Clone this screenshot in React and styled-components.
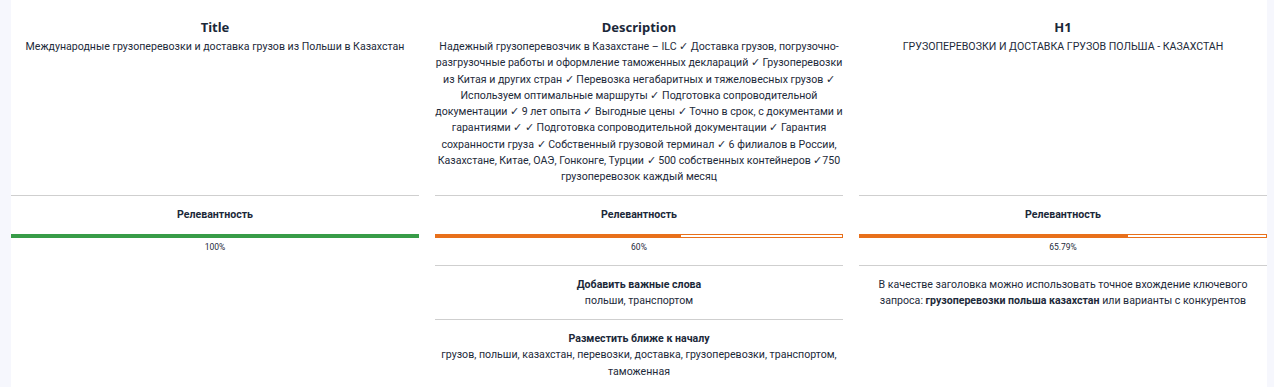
import React from "react";
import styled, { createGlobalStyle } from "styled-components";

const GlobalStyle = createGlobalStyle`
  html, body {
    margin: 0;
    padding: 0;
    background: #f6f7fd;
  }
  body {
    font-family: Roboto, "Liberation Sans", Arial, sans-serif;
    color: #1d2a3a;
  }
`;

const columns = [
  {
    heading: "Title",
    text: "Международные грузоперевозки и доставка грузов из Польши в Казахстан",
    score: 100,
    notes: [],
  },
  {
    heading: "Description",
    text: "Надежный грузоперевозчик в Казахстане – ILC ✓ Доставка грузов, погрузочно-разгрузочные работы и оформление таможенных деклараций ✓ Грузоперевозки из Китая и других стран ✓ Перевозка негабаритных и тяжеловесных грузов ✓ Используем оптимальные маршруты ✓ Подготовка сопроводительной документации ✓ 9 лет опыта ✓ Выгодные цены ✓ Точно в срок, с документами и гарантиями ✓ ✓ Подготовка сопроводительной документации ✓ Гарантия сохранности груза ✓ Собственный грузовой терминал ✓ 6 филиалов в России, Казахстане, Китае, ОАЭ, Гонконге, Турции ✓ 500 собственных контейнеров ✓750 грузоперевозок каждый месяц",
    score: 60,
    notes: [
      { title: "Добавить важные слова", body: "польши, транспортом" },
      {
        title: "Разместить ближе к началу",
        body: "грузов, польши, казахстан, перевозки, доставка, грузоперевозки, транспортом, таможенная",
      },
    ],
  },
  {
    heading: "H1",
    text: "ГРУЗОПЕРЕВОЗКИ И ДОСТАВКА ГРУЗОВ ПОЛЬША - КАЗАХСТАН",
    score: 65.79,
    notes: [
      {
        body: (
          <>
            В качестве заголовка можно использовать точное вхождение ключевого
            запроса: <b>грузоперевозки польша казахстан</b> или варианты с
            конкурентов
          </>
        ),
      },
    ],
  },
];

export default function App() {
  return (
    <>
      <GlobalStyle />
      <Page>
        <Grid>
          {columns.map((c) => (
            <Column key={c.heading}>
              <Head>
                <Heading>{c.heading}</Heading>
                <Text>{c.text}</Text>
              </Head>
              <Section>
                <Label>Релевантность</Label>
                <Bar $color={c.score >= 100 ? "#389c48" : "#e8701b"}>
                  <Fill style={{ width: `${c.score}%` }} />
                  {c.score < 100 && <Rest />}
                </Bar>
                <Percent>{c.score}%</Percent>
              </Section>
              {c.notes.map((n, i) => (
                <Section key={i}>
                  {n.title && <Label>{n.title}</Label>}
                  <Text>{n.body}</Text>
                </Section>
              ))}
            </Column>
          ))}
        </Grid>
      </Page>
    </>
  );
}

const Page = styled.div`
  margin: 0 7px 0 11px;
  background: #ffffff;
  min-height: 387px;
`;

const Grid = styled.div`
  display: grid;
  grid-template-columns: repeat(3, 1fr);
  column-gap: 16px;
`;

const Column = styled.div`
  display: grid;
  grid-row: span 4;
  grid-template-rows: subgrid;
  row-gap: 0;
  align-content: start;
`;

const Head = styled.div`
  padding: 17px 0 10px;
  text-align: center;
`;

const Heading = styled.div`
  font-family: "Noto Sans", "Open Sans", sans-serif;
  font-weight: 700;
  font-size: 13px;
  line-height: 20px;
  margin-bottom: 2px;
  color: #1b2839;
`;

const Text = styled.div`
  font-size: 10.6px;
  line-height: 16.25px;
  b {
    font-weight: 700;
  }
`;

const Section = styled.div`
  border-top: 1px solid #cfcfcf;
  padding: 11px 0 10px;
  text-align: center;
`;

const Label = styled.div`
  font-size: 10.6px;
  line-height: 16.25px;
  font-weight: 700;
  color: #1b2839;
`;

const Bar = styled.div`
  display: flex;
  height: 4px;
  margin-top: 10px;
  --bar: ${(p) => p.$color};
`;

const Fill = styled.div`
  height: 4px;
  background: var(--bar);
`;

const Rest = styled.div`
  flex: 1;
  box-sizing: border-box;
  height: 4px;
  border: 1px solid var(--bar);
  background: #ffffff;
`;

const Percent = styled.div`
  font-size: 8.5px;
  line-height: 12px;
  margin: 3px 0 2px;
`;
